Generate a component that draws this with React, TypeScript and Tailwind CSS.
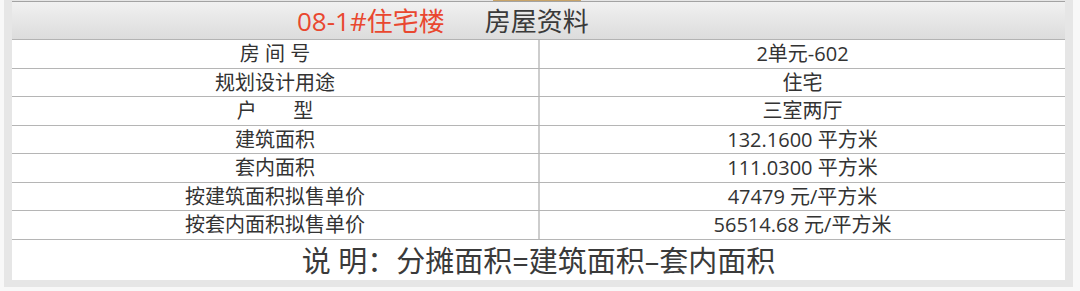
const rows = [
  { label: "房 间 号", value: "2单元-602", h: "h-[29px]" },
  { label: "规划设计用途", value: "住宅", h: "h-[28px]" },
  { label: "户\u00a0\u00a0\u00a0\u00a0\u00a0\u00a0\u00a0型", value: "三室两厅", h: "h-[29px]" },
  { label: "建筑面积", value: "132.1600 平方米", h: "h-[28px]" },
  { label: "套内面积", value: "111.0300 平方米", h: "h-[29px]" },
  { label: "按建筑面积拟售单价", value: "47479 元/平方米", h: "h-[28px]" },
  { label: "按套内面积拟售单价", value: "56514.68 元/平方米", h: "h-[29px]" },
];

export default function App() {
  return (
    <div className="w-[1080px] h-[291px] bg-[#f8f8f8] pl-[4px] pr-[7px] pb-[4px] font-['Open_Sans','Noto_Sans_CJK_SC',sans-serif] text-[#333]">
      <div className="relative h-full bg-[#e6e6e6] px-[8px] pt-[1px] pb-[7px]">
        <div className="absolute top-0 left-[489px] w-[88px] h-[1px] bg-[#c9a468]" />
        <div className="flex h-full flex-col bg-white">
          <div className="flex h-[39px] items-center border-y border-t-[#a3a3a3] border-b-[#b3b3b3] bg-gradient-to-b from-[#f1f1f1] to-[#dcdcdc] pl-[285px] text-[26px] leading-none">
            <span className="text-[#e9472f]">08-1#住宅楼</span>
            <span className="ml-[40px] text-[#3a3a3a]">房屋资料</span>
          </div>
          {rows.map((r) => (
            <div
              key={r.value}
              className={`grid grid-cols-[528px_1fr] border-b border-[#b5b5b5] text-[20px] leading-none ${r.h}`}
            >
              <div className="flex items-center justify-center border-r-2 border-[#cdcdcd] whitespace-pre">
                {r.label}
              </div>
              <div className="flex items-center justify-center">{r.value}</div>
            </div>
          ))}
          <div className="flex flex-1 items-center justify-center text-[29px] leading-none text-[#3a3a3a]">
            说 明：分摊面积=建筑面积–套内面积
          </div>
        </div>
      </div>
    </div>
  );
}
